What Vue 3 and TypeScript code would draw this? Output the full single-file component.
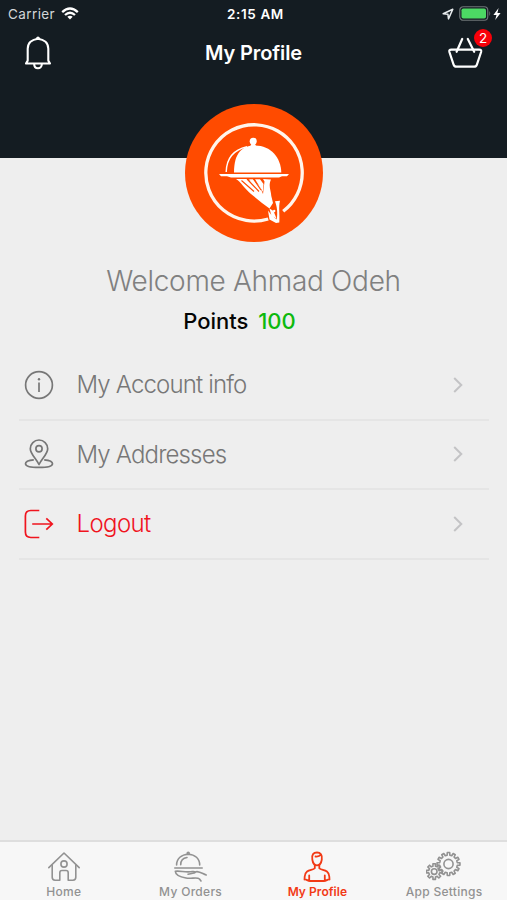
<script setup lang="ts">
import { ref } from 'vue'

interface MenuItem {
  id: 'account' | 'addresses' | 'logout'
  label: string
}
interface Tab {
  id: 'home' | 'orders' | 'profile' | 'settings'
  label: string
}

const menu: MenuItem[] = [
  { id: 'account', label: 'My Account info' },
  { id: 'addresses', label: 'My Addresses' },
  { id: 'logout', label: 'Logout' },
]
const tabs: Tab[] = [
  { id: 'home', label: 'Home' },
  { id: 'orders', label: 'My Orders' },
  { id: 'profile', label: 'My Profile' },
  { id: 'settings', label: 'App Settings' },
]
const activeTab = ref<Tab['id']>('profile')
const basketCount = ref(2)
const points = ref(100)

function gear(cx: number, cy: number, outer: number, inner: number, teeth: number): string {
  const step = (Math.PI * 2) / teeth
  const pts: string[] = []
  for (let i = 0; i < teeth; i++) {
    const a = i * step - Math.PI / 2
    const corners: [number, number][] = [
      [-0.29, inner], [-0.2, outer], [0.2, outer], [0.29, inner],
    ]
    for (const [offset, r] of corners) {
      const t = a + offset * step
      pts.push(`${(cx + r * Math.cos(t)).toFixed(2)} ${(cy + r * Math.sin(t)).toFixed(2)}`)
    }
  }
  return `M${pts.join('L')}Z`
}
const bigGear = gear(22.5, 13, 11.5, 8.9, 12)
const smallGear = gear(8.2, 20.6, 7.9, 5.6, 8)
</script>

<template>
  <div class="screen">
    <header class="top">
      <div class="status">
        <div class="status-left">
          <span class="carrier">Carrier</span>
          <svg class="wifi" width="18" height="13" viewBox="0 0 18 13">
            <g fill="none" stroke="#fff" stroke-width="2.3">
              <path d="M1.2 5.1Q9 -2 16.8 5.1" />
              <path d="M4 8Q9 3.5 14 8" />
            </g>
            <path d="M6.3 9.7Q9 7.7 11.7 9.7L9 12.5Z" fill="#fff" />
          </svg>
        </div>
        <span class="time">2:15 AM</span>
        <div class="status-right">
          <svg width="12" height="12" viewBox="0 0 12 12">
            <path d="M1.2 5.8L10.8 1.2L6.5 10.9L5.9 6.2Z" fill="none" stroke="#e8ecee" stroke-width="1.5" stroke-linejoin="round" />
          </svg>
          <svg class="battery" width="33" height="15" viewBox="0 0 33 15">
            <rect x=".75" y=".75" width="28" height="13.5" rx="3.5" fill="none" stroke="#6d7477" stroke-width="1.2" />
            <rect x="2.500" y="2.5" width="24.500" height="10" rx="1.8" fill="#4cd964" />
            <path d="M30.3 5Q32.2 7.5 30.3 10Z" fill="#6d7477" />
          </svg>
          <svg width="8" height="12" viewBox="0 0 8 12">
            <path d="M5.6 0L.4 6.900H3.5L2.2 12L7.6 4.900H4.4Z" fill="#fff" />
          </svg>
        </div>
      </div>
      <div class="nav">
        <svg width="28" height="36" viewBox="0 0 28 36">
          <g fill="none" stroke="#fff" stroke-width="2.1" stroke-linejoin="round" stroke-linecap="round">
            <path d="M2 28.5H26L24.3 25.6V13.8C24.3 8.1 20.2 4.4 14 3.7C7.8 4.4 3.7 8.1 3.7 13.8V25.6Z" />
            <path d="M10.2 29.2C10.2 34.5 17.8 34.5 17.8 29.2" />
            <path d="M12.8 3.6L14 2.5L15.2 3.6" />
          </g>
        </svg>
        <h1>My Profile</h1>
        <div class="basket">
          <svg width="36" height="32" viewBox="0 0 36 32">
            <g fill="none" stroke="#fff" stroke-width="2.2" stroke-linejoin="round" stroke-linecap="round">
              <path d="M4.3 12.700H32.200Q34.800 12.7 34.1 15L29.9 27.6Q29.2 29.7 27 29.700H9.500Q7.3 29.7 6.6 27.6L2.4 15Q1.7 12.7 4.3 12.7Z" />
              <path d="M15.2 2L9.600 14.800M20.8 2L27.2 14.8" />
            </g>
          </svg>
          <span class="badge">{{ basketCount }}</span>
        </div>
      </div>
    </header>

    <main class="profile">
      <svg class="avatar" width="138" height="138" viewBox="0 0 138 138">
        <circle cx="69" cy="69" r="69" fill="#ff4b00" />
        <path d="M83.2 115A48.200 48.200 0 1 1 98.200 107.300" fill="none" stroke="#fff5ec" stroke-width="3.300" />
        <g fill="#fff">
          <circle cx="68.200" cy="37.300" r="3.500" />
          <path d="M66.800 39H69.600L71 42H65.400Z" />
          <path d="M49 68.500C49 49 57 41.500 70 41.500C86 41.500 96 54 96.300 68.500Z" />
          <path d="M34 70H104L102 72.200H97L94 73.500H46L42 72.200H36Z" />
          <path d="M51 75H62L75 83L78 90L79.500 77.500L78 75L86 75.500C83 82 86 86 86.300 92L88 99L84.500 104.500L77 99L66 90C59 84 56 78 51 75Z" />
          <path d="M90 97.200L95 96.700C93.300 103 95 111 94.300 118.500L91 119L84.500 115.500L83 106.500L86 110.500L91.700 115.500C93 108.500 91.800 102 90 97.200Z" />
          <path d="M84.500 104.500L88.500 107L91.500 114.500L86.500 112Z" />
          <circle cx="89.200" cy="107" r="1.200" />
          <path d="M64 75.200H68L75 83L77 92Z" />
          <path d="M70 75.200H75L78.500 80L78 88Z" />
        </g>
        <path d="M56.500 76.500L69 87.500M62 75L74 87.500M68.500 75L76 86" fill="none" stroke="#ff4b00" stroke-width="1.100" />
        <path d="M62 42.800C48 46 41.500 55 41.200 68" fill="none" stroke="#fff" stroke-width="1.400" />
      </svg>
      <h2>Welcome Ahmad Odeh</h2>
      <p class="points"><span>Points</span><span class="value">{{ points }}</span></p>

      <ul class="menu">
        <li v-for="item in menu" :key="item.id" :class="item.id">
          <svg class="menu-icon" width="30" height="30" viewBox="0 0 30 30">
            <g fill="none" stroke="currentColor" stroke-width="1.700">
              <template v-if="item.id === 'account'">
                <circle cx="15" cy="15" r="13.400" />
                <path d="M15 12.500V22" />
                <circle cx="15" cy="9.200" r="1.200" fill="currentColor" stroke="none" />
              </template>
              <template v-else-if="item.id === 'addresses'">
                <path d="M15 25.500C12.500 20 6.300 15 6.300 9.700A8.700 8.700 0 0 1 23.700 9.700C23.700 15 17.500 20 15 25.500Z" stroke-linejoin="round" />
                <circle cx="15" cy="9.700" r="3.100" />
                <path d="M9.800 20.800C4.500 21.300 1.500 22.800 1.500 24.700C1.500 27 7 28.400 15 28.400S28.500 27 28.500 24.700C28.500 22.800 25.500 21.300 20.200 20.800" />
              </template>
              <template v-else>
                <path d="M15.300 1.500H6.800Q1.400 1.500 1.400 6.900V23.100Q1.400 28.500 6.800 28.500H15.300M8.200 15H28M22.300 9.300L28.300 15L22.300 20.700" />
              </template>
            </g>
          </svg>
          <span class="label">{{ item.label }}</span>
          <svg width="10" height="16" viewBox="0 0 10 16">
            <path d="M1.200 1L8.300 8L1.200 15" fill="none" stroke="#c3c3c5" stroke-width="2" />
          </svg>
        </li>
      </ul>
    </main>

    <nav class="tabs">
      <button v-for="tab in tabs" :key="tab.id" :class="{ active: tab.id === activeTab }" @click="activeTab = tab.id">
        <svg width="36" height="32" viewBox="0 0 36 32">
          <g fill="none" stroke="currentColor" stroke-width="1.600" stroke-linejoin="round" stroke-linecap="round">
            <template v-if="tab.id === 'home'">
              <path d="M2.800 16.700L18 2L33.200 16.700" />
              <path d="M6.200 14V26.300Q6.200 29.200 9 29.200H13.800V21.700Q13.800 19.500 16 19.500H20Q22.200 19.500 22.200 21.700V29.200H27Q29.800 29.200 29.800 26.300V14" />
              <circle cx="18" cy="13" r="3.100" />
            </template>
            <template v-else-if="tab.id === 'orders'">
              <path d="M3.600 14C3.600 7.500 8.500 3.500 15.200 3.200C22 3.500 26.700 7.500 26.700 14M7.700 13.700C7.700 9.800 10.300 7 14 6.500M1.800 17H29.200" />
              <circle cx="15.200" cy="2.200" r="1" />
              <path d="M2.300 20.200C8 19.500 12 21.800 19.500 20.500C22 20.200 23 21.300 21 22L15 23.200M21 21.700L24 20.600C28 21 30 23 33.200 24M2.300 20.200C2.500 24.500 9 26.300 13 27C18 28.300 24 25.500 26.500 28L28 30" />
            </template>
            <template v-else-if="tab.id === 'profile'">
              <path d="M13.300 8.500C12.500 3.500 14.500 1.500 18 1.500S23.500 4 22.800 8.500C22.300 12 21 14.300 18 14.300S13.800 12 13.300 8.500ZM16.500 5.500C18.500 5.700 20.700 5.300 21.700 3.800" stroke-width="1.800" />
              <path d="M15.800 14V17.200C13.500 20 6.500 17.500 5.700 25.500L5.500 28.500C7.500 28 8.500 30 11 30H25C27.500 30 28.500 28 30.500 28.500L30.300 25.500C29.500 17.500 22.500 20 20.300 17.200V14M10.200 24.500V29.500M25.800 24.500V29.500" stroke-width="1.800" />
            </template>
            <template v-else>
              <path :d="bigGear" />
              <circle cx="22.500" cy="13" r="4.600" />
              <path :d="smallGear" />
              <circle cx="8.200" cy="20.600" r="2.800" />
            </template>
          </g>
        </svg>
        <span>{{ tab.label }}</span>
      </button>
    </nav>
  </div>
</template>

<style>
body { margin: 0; background: #eee; }
</style>

<style scoped>
.screen {
  width: 507px;
  height: 900px;
  display: flex;
  flex-direction: column;
  overflow: hidden;
  background: #eee;
  font-family: Inter, 'Liberation Sans', sans-serif;
}
.top {
  height: 158px;
  flex: none;
  background: #141c22;
  color: #fff;
}
.status {
  display: grid;
  grid-template-columns: 1fr auto 1fr;
  align-items: center;
  height: 27px;
  padding: 0 6px 0 8px;
  font-size: 13.5px;
}
.status-left, .status-right { display: flex; align-items: center; }
.status-left { gap: 6px; }
.carrier { color: #d2d6d8; letter-spacing: .4px; }
.status-right { justify-content: flex-end; gap: 5px; }
.status-right .battery { margin-right: -4px; }
.time { margin-left: 2px; font-weight: 600; font-size: 13.5px; letter-spacing: .6px; }
.nav {
  display: flex;
  align-items: center;
  justify-content: space-between;
  height: 51px;
  padding: 0 24px 0 24px;
}
h1 { margin: 1px 0 0 8px; font-size: 20px; font-weight: 600; line-height: 24px; letter-spacing: -.1px; }
.basket { position: relative; height: 32px; }
.badge {
  position: absolute;
  top: -8px;
  right: -9px;
  width: 18px;
  height: 18px;
  border-radius: 50%;
  background: #f80009;
  font-size: 13.5px;
  line-height: 18px;
  text-align: center;
}
.profile {
  flex: 1;
  display: flex;
  flex-direction: column;
  align-items: center;
  min-height: 0;
}
.avatar { display: block; margin-top: -54.5px; flex: none; }
h2 {
  margin: 21.5px 0 0;
  font-size: 28px;
  line-height: 36px;
  font-weight: 300;
  letter-spacing: -.3px;
  color: #808080;
  white-space: nowrap;
}
.points {
  display: flex;
  gap: 10px;
  margin: 8px 28px 0 0;
  font-size: 22px;
  line-height: 28px;
  font-weight: 500;
  letter-spacing: -.05px;
  color: #050505;
}
.value { color: #0db90d; }
.menu {
  width: 470px;
  margin: 16px 0 0;
  padding: 0;
  list-style: none;
}
.menu li {
  display: flex;
  align-items: center;
  box-sizing: border-box;
  height: 69.6px;
  padding: 0 26px 0 5.5px;
  border-bottom: 2px solid #e5e5e5;
  color: #777;
}
.menu .logout { color: #f0141e; }
.label {
  flex: 1;
  margin-left: 22.5px;
  font-size: 24px;
  font-weight: 300;
  letter-spacing: -.85px;
  white-space: nowrap;
}
.logout .label { letter-spacing: -.6px; }
.tabs {
  display: grid;
  grid-template-columns: repeat(4, 1fr);
  height: 60px;
  box-sizing: border-box;
  border-top: 2px solid #dedede;
  background: #f7f7f7;
}
.tabs button {
  display: flex;
  flex-direction: column;
  align-items: center;
  padding: 9px 0 0 1px;
  border: 0;
  background: none;
  color: #929292;
  font-family: inherit;
  font-size: 12px;
  font-weight: 500;
  line-height: 17px;
  letter-spacing: .3px;
}
.tabs svg { flex: none; }
.tabs .active { color: #f23a16; font-weight: 600; letter-spacing: .05px; }
</style>
